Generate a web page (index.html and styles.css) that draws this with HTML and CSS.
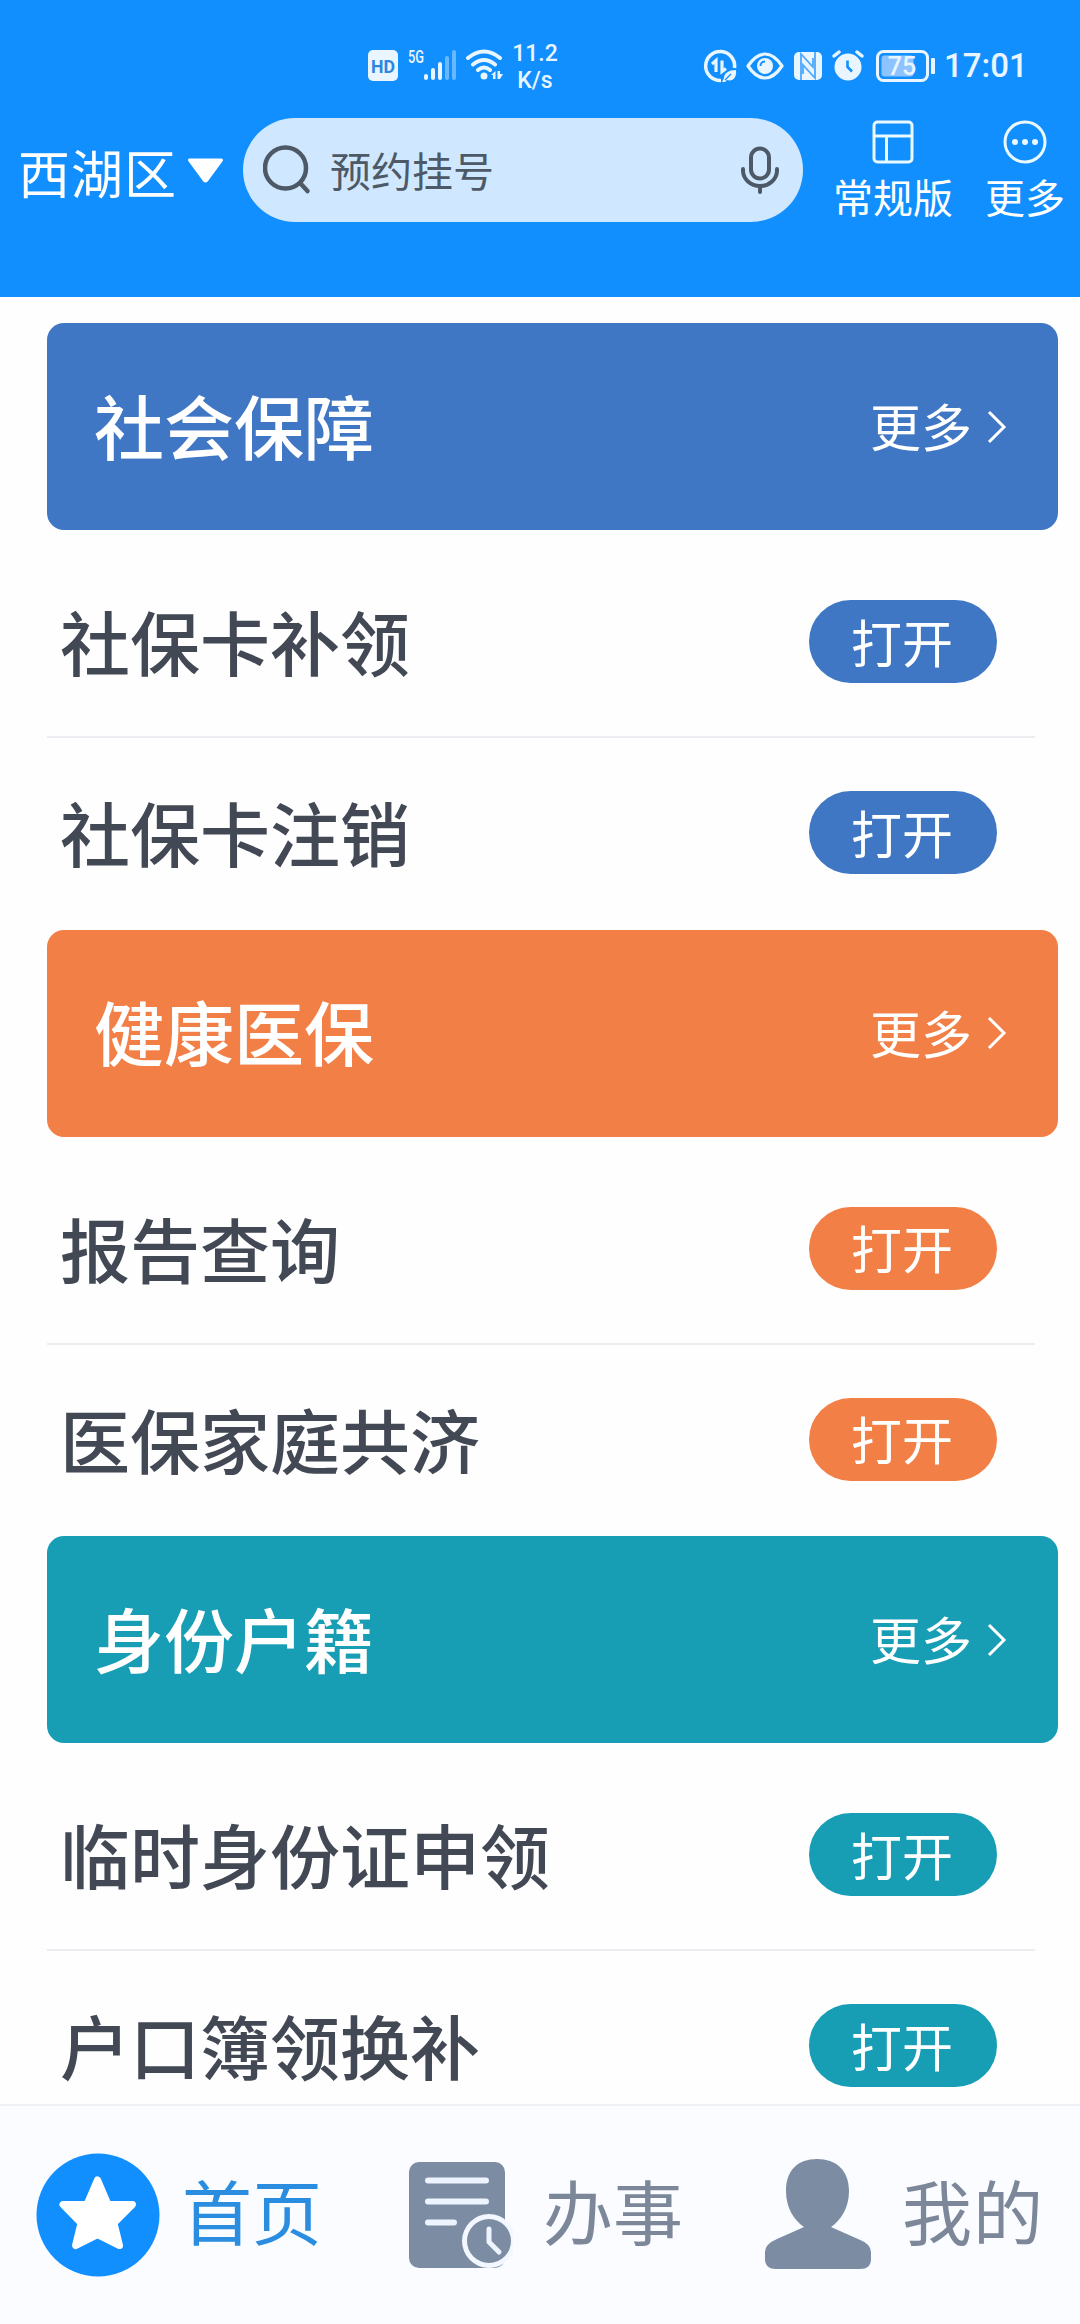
FILE: index.html
```html
<!DOCTYPE html>
<html lang="zh-CN">
<head>
    <meta charset="UTF-8">
    <meta name="viewport" content="width=device-width, initial-scale=1.0">
    <title>首页</title>
    <link rel="stylesheet" href="styles.css">
</head>
<body>
<div class="app">

    <!-- Header -->
    <header class="header">
        <div class="status-bar">
            <svg class="icon-hd" width="30" height="31" viewBox="0 0 30 31">
                <rect width="30" height="31" rx="5" fill="#e9f5ff"/>
                <text x="15" y="22.500" text-anchor="middle" textLength="24" lengthAdjust="spacingAndGlyphs">HD</text>
            </svg>
            <svg class="icon-signal" width="50" height="34" viewBox="0 -3 50 34">
                <text x="0" y="12.500" textLength="16" lengthAdjust="spacingAndGlyphs">5G</text>
                <g stroke="#e9f5ff" stroke-width="4" stroke-linecap="round">
                    <path d="M18 26v2M25 20v8M32 14v14"/>
                    <path opacity=".4" d="M39 8v20M46 2v26"/>
                </g>
            </svg>
            <svg class="icon-wifi" width="37" height="32" viewBox="0 0 37 32">
                <g fill="none" stroke="#e9f5ff" stroke-width="4" stroke-linecap="round">
                    <path d="M2 9q16-13 32 0M7 15.500q11-9 22 0M12 21q6-5 12 0"/>
                </g>
                <circle cx="18" cy="27" r="3.500" fill="#e9f5ff"/>
                <path d="M29.500 22v8h-2.500v-4h-2zM31.500 30v-8h2.500v3h3l-3 5z" fill="#e9f5ff"/>
            </svg>
            <div class="net-speed">11.2<br>K/s</div>

            <svg class="icon-saver" width="34" height="34" viewBox="0 0 34 34">
                <path d="M31.500 19A14.500 14.500 0 1 0 18 31.500" fill="none" stroke="#e9f5ff" stroke-width="3.500"/>
                <path d="M9 15l4-3.500V23M19 11.500V22.500l4-3" fill="none" stroke="#e9f5ff" stroke-width="3.200"/>
                <path d="M33 21c-7 0-12 3-12 8l-2 4h3l2-2c6 2 10-3 9-10z" fill="#e9f5ff"/>
                <path d="M22 31l6-6" stroke="#118fff" stroke-width="1.300"/>
            </svg>
            <svg class="icon-eye" width="38" height="28" viewBox="0 0 38 28">
                <path d="M2 14Q10 2 19 2t17 12Q28 26 19 26T2 14z" fill="none" stroke="#e9f5ff" stroke-width="3.200" stroke-linejoin="round"/>
                <circle cx="19" cy="14" r="8" fill="#e9f5ff"/>
                <path d="M14.500 14a4.500 4.500 0 0 1 4.500-4.500" fill="none" stroke="#118fff" stroke-width="2"/>
            </svg>
            <svg class="icon-nfc" width="28" height="28" viewBox="0 0 28 28">
                <rect width="28" height="28" rx="5" fill="#e9f5ff"/>
                <path d="M7 28V2L19 15V6M21 0v26L9 13v9" fill="none" stroke="#4da9ff" stroke-width="1.800"/>
            </svg>
            <svg class="icon-alarm" width="32" height="31" viewBox="0 0 32 31">
                <circle cx="16" cy="17" r="13.500" fill="#e9f5ff"/>
                <path d="M2 6l5-4M30 6l-5-4" stroke="#e9f5ff" stroke-width="3.500" stroke-linecap="round"/>
                <path d="M15.500 10.500V17l4.500 4.500" fill="none" stroke="#118fff" stroke-width="2.600"/>
            </svg>
            <svg class="icon-battery" width="60" height="32" viewBox="0 0 60 32">
                <rect x="1.500" y="1.500" width="50" height="29" rx="6" fill="none" stroke="#e9f5ff" stroke-width="3"/>
                <rect x="5.500" y="5.500" width="32" height="21" rx="3" fill="#8dc4ff"/>
                <rect x="55" y="8" width="4" height="16" rx="1" fill="#e9f5ff"/>
                <text x="26" y="25" text-anchor="middle">75</text>
            </svg>
            <div class="clock">17:01</div>
        </div>

        <div class="top-nav">
            <div class="location">
                <span>西湖区</span>
                <svg width="37" height="25" viewBox="0 0 37 25">
                    <path d="M2.500 2h32L19.500 22.500q-1 1.200-2 0z" fill="#fff" stroke="#fff" stroke-width="3" stroke-linejoin="round"/>
                </svg>
            </div>

            <div class="search">
                <svg width="48" height="50" viewBox="0 0 48 50" fill="none" stroke="#4d5966" stroke-width="4.500" stroke-linecap="round">
                    <circle cx="22.500" cy="23" r="20.500"/>
                    <path d="M38 39l6.500 7"/>
                </svg>
                <span class="search-text">预约挂号</span>
                <svg width="38" height="48" viewBox="0 0 38 48" fill="none" stroke="#4d5966" stroke-width="4" stroke-linecap="round">
                    <rect x="10" y="2.500" width="18" height="30" rx="9"/>
                    <path d="M2 23v1.500a17 15.500 0 0 0 34 0V23M19 41v5"/>
                </svg>
            </div>

            <div class="nav-item nav-version">
                <svg width="42" height="44" viewBox="0 0 42 44" fill="none" stroke="#e9f9ff" stroke-width="3">
                    <rect x="2" y="2" width="38" height="40" rx="3.500"/>
                    <path d="M2 16h38M14.500 16v26"/>
                </svg>
                <span>常规版</span>
            </div>
            <div class="nav-item nav-more">
                <svg width="44" height="44" viewBox="0 0 44 44">
                    <circle cx="22" cy="22" r="20" fill="none" stroke="#e9f9ff" stroke-width="3"/>
                    <g fill="#e9f9ff">
                        <circle cx="12" cy="22" r="3"/>
                        <circle cx="22" cy="22" r="3"/>
                        <circle cx="32" cy="22" r="3"/>
                    </g>
                </svg>
                <span>更多</span>
            </div>
        </div>
    </header>

    <!-- Service list -->
    <main class="content">
        <section class="section blue">
            <div class="section-head">
                <h2>社会保障</h2>
                <a class="more"><span>更多</span>
                    <svg width="20" height="36" viewBox="0 0 20 36"><path d="M2 3l15 15L2 33"/></svg>
                </a>
            </div>
            <div class="service"><span>社保卡补领</span><button>打开</button></div>
            <div class="service"><span>社保卡注销</span><button>打开</button></div>
        </section>

        <section class="section orange">
            <div class="section-head">
                <h2>健康医保</h2>
                <a class="more"><span>更多</span>
                    <svg width="20" height="36" viewBox="0 0 20 36"><path d="M2 3l15 15L2 33"/></svg>
                </a>
            </div>
            <div class="service"><span>报告查询</span><button>打开</button></div>
            <div class="service"><span>医保家庭共济</span><button>打开</button></div>
        </section>

        <section class="section teal">
            <div class="section-head">
                <h2>身份户籍</h2>
                <a class="more"><span>更多</span>
                    <svg width="20" height="36" viewBox="0 0 20 36"><path d="M2 3l15 15L2 33"/></svg>
                </a>
            </div>
            <div class="service"><span>临时身份证申领</span><button>打开</button></div>
            <div class="service"><span>户口簿领换补</span><button>打开</button></div>
        </section>
    </main>

    <!-- Bottom tabs -->
    <nav class="tab-bar">
        <a class="tab tab-home active">
            <svg width="124" height="124" viewBox="0 0 124 124">
                <circle cx="62" cy="62" r="61.500" fill="#118fff"/>
                <path d="M61.500 27L72 51.500h24.500L78 70l5.500 22.500-22-11-22 11L45 70 27 51.500h24z" fill="#fff" stroke="#fff" stroke-width="7" stroke-linejoin="round"/>
            </svg>
            <span>首页</span>
        </a>
        <a class="tab tab-work">
            <svg width="104" height="108" viewBox="0 0 104 108">
                <rect x="0" y="1" width="96" height="106" rx="10" fill="#7c8ca2"/>
                <path d="M19 19.500h58M19 40.500h58M19 61.500h26" stroke="#edf3ff" stroke-width="6" stroke-linecap="round"/>
                <circle cx="80" cy="80" r="27" fill="#f3f7ff"/>
                <circle cx="80" cy="80" r="22" fill="#7c8ca2"/>
                <path d="M80 68v13l10 10" fill="none" stroke="#edf3ff" stroke-width="5" stroke-linecap="round" stroke-linejoin="round"/>
            </svg>
            <span>办事</span>
        </a>
        <a class="tab tab-mine">
            <svg width="108" height="112" viewBox="0 0 108 112">
                <path d="M53 1C72 1 85 12 85 33c0 17-8 29-18 36l27 12q13 5 13 13v7q0 10-11 10H12Q1 111 1 101v-7q0-8 12-13l27-12C30 62 22 50 22 33 22 12 34 1 53 1z" fill="#7c8ca2"/>
            </svg>
            <span>我的</span>
        </a>
    </nav>
</div>
</body>
</html>
```
FILE: styles.css
```css
/* Reset and basic styles */
* {
    box-sizing: border-box;
}

html, body {
    margin: 0;
    padding: 0;
    background: #fefefe;
    font-family: "Noto Sans CJK SC", "Noto Sans", sans-serif;
}

svg {
    display: block;
    flex: none;
}

.app {
    display: flex;
    flex-direction: column;
    width: 1080px;
    height: 2324px;
    overflow: hidden;
}

/* Header */
.header {
    flex: none;
    height: 297px;
    background: #118fff;
    color: white;
}

.status-bar {
    display: flex;
    align-items: center;
    height: 118px;
    padding: 13px 0 0 368px;
    font-family: Roboto, sans-serif;
    color: #e9f5ff;
}

.status-bar text {
    font-family: Roboto, sans-serif;
    font-weight: 500;
    fill: #e9f5ff;
}

.icon-hd text {
    font-size: 19px;
    font-weight: 700;
    fill: #2d86e0;
}

.icon-signal {
    margin: 0 0 3px 10px;
}

.icon-signal text {
    font-size: 18px;
}

.icon-wifi {
    margin: 0 0 2px 8px;
}

.net-speed {
    width: 50px;
    margin: 2px 0 0 7px;
    font-size: 23px;
    font-weight: 500;
    line-height: 27px;
    text-align: center;
}

.icon-saver {
    margin-left: 143px;
}

.icon-eye {
    margin-left: 9px;
}

.icon-nfc {
    margin-left: 10px;
}

.icon-alarm {
    margin-left: 10px;
}

.icon-battery {
    margin-left: 12px;
}

.icon-battery text {
    font-size: 25px;
}

.clock {
    margin-left: 8px;
    font-size: 33px;
    font-weight: 500;
    line-height: 40px;
}

.top-nav {
    display: flex;
    align-items: center;
    height: 104px;
}

.location {
    display: flex;
    align-items: center;
    width: 243px;
    padding-left: 18px;
    font-size: 52px;
    line-height: 60px;
    letter-spacing: 1px;
}

.location span {
    padding-top: 3px;
}

.location svg {
    margin-left: 10px;
}

.search {
    display: flex;
    align-items: center;
    width: 560px;
    height: 104px;
    padding: 0 24px 0 20px;
    border-radius: 52px;
    background: #cfe8ff;
    color: #4d5966;
}

.search-text {
    flex: 1;
    padding: 0 0 2px 19px;
    font-size: 41px;
    line-height: 50px;
}

.nav-item {
    display: flex;
    flex-direction: column;
    align-items: center;
    font-size: 40px;
    line-height: 50px;
    gap: 7px;
}

.nav-version {
    margin-left: 30px;
}

.nav-more {
    margin-left: 32px;
}

/* Service list */
.content {
    flex: 1;
    min-height: 0;
    padding: 26px 22px 0 47px;
    overflow: hidden;
}

.section {
    height: 606.5px;
}

.section-head {
    display: flex;
    align-items: center;
    justify-content: space-between;
    height: 207px;
    margin-bottom: 17px;
    padding: 0 51px 0 47px;
    border-radius: 17px;
    color: white;
}

.section-head h2 {
    margin: 0 0 4px;
    font-size: 70px;
    font-weight: 500;
    line-height: 90px;
}

.more {
    display: flex;
    align-items: center;
    font-size: 51px;
    line-height: 64px;
}

.more span {
    margin-bottom: 3px;
}

.more svg {
    margin-left: 15px;
    fill: none;
    stroke: white;
    stroke-width: 3;
}

.service {
    display: flex;
    align-items: center;
    justify-content: space-between;
    width: 988px;
    height: 191px;
    padding: 0 38px 0 13px;
    border-bottom: 2px solid #ebedf0;
    color: #434954;
}

.service:last-child {
    border-color: transparent;
}

.service span {
    margin-bottom: 1px;
    font-size: 70px;
    font-weight: 500;
    line-height: 90px;
}

.service button {
    width: 188px;
    height: 83px;
    padding: 0 2px 2px 0;
    border: none;
    border-radius: 42px;
    color: white;
    font-family: inherit;
    font-size: 51px;
    line-height: 80px;
}

.blue .section-head,
.blue button {
    background: #4077c4;
}

.orange .section-head,
.orange button {
    background: #f27f45;
}

.teal .section-head,
.teal button {
    background: #179db4;
}

/* Bottom tabs */
.tab-bar {
    display: flex;
    align-items: center;
    flex: none;
    height: 220px;
    border-top: 2px solid #eef0f5;
    background: #fafcff;
}

.tab {
    display: flex;
    align-items: center;
    color: #7c889a;
    font-size: 70px;
    line-height: 90px;
}

.tab span {
    margin-top: -10px;
}

.tab-home {
    width: 409px;
    padding-left: 36px;
    gap: 22px;
}

.tab-work {
    width: 355px;
    gap: 30px;
}

.tab-mine {
    gap: 30px;
}

.tab-mine svg {
    margin-top: -3px;
}

.tab-mine span {
    letter-spacing: 1px;
}

.active {
    color: #2b8de0;
}
```
